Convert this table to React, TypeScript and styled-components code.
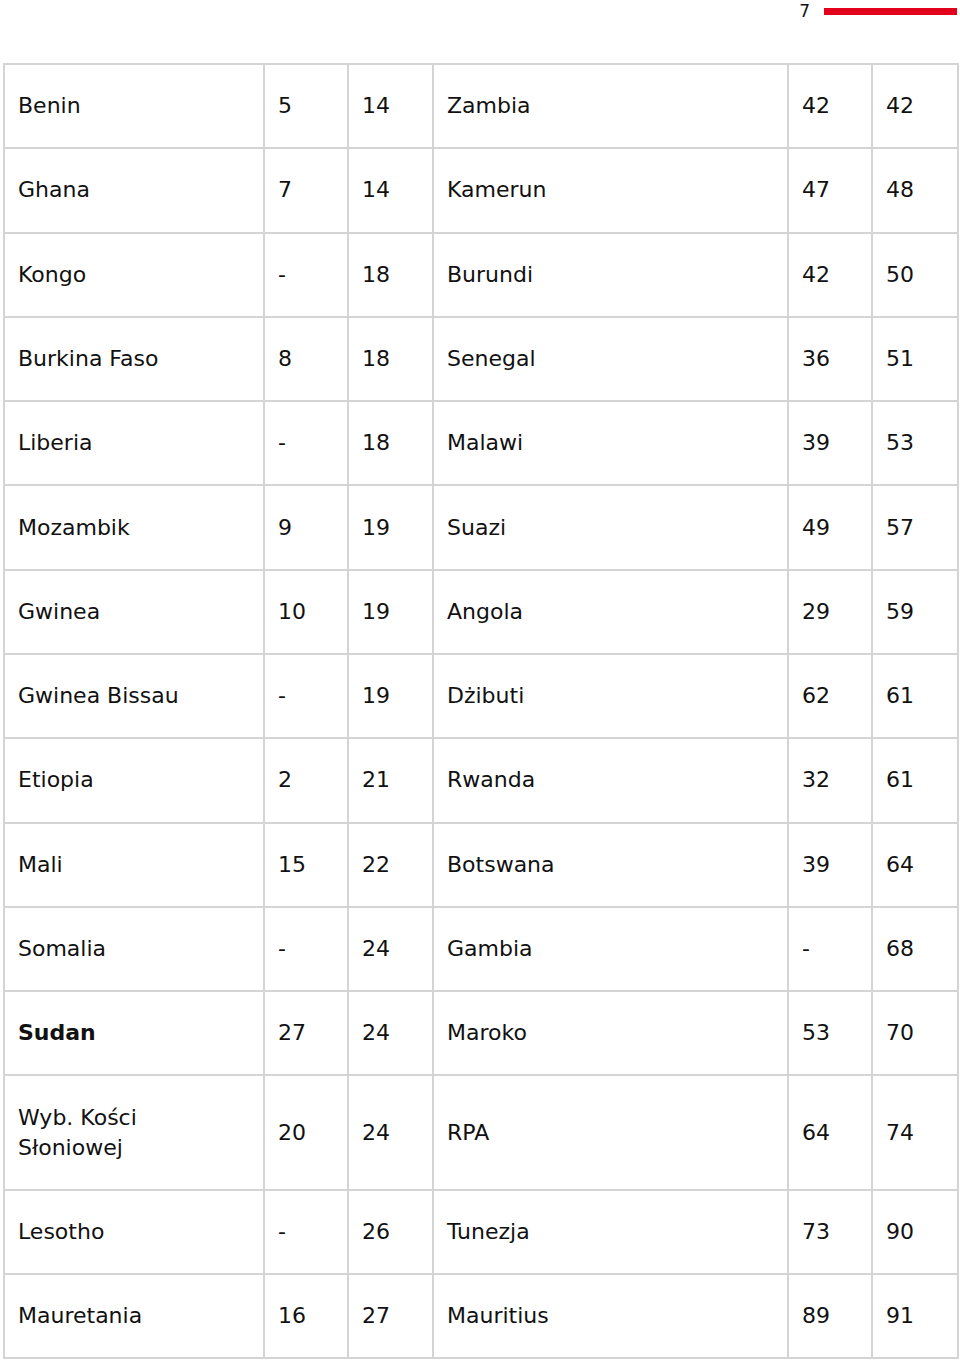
import React from "react";
import styled, { createGlobalStyle } from "styled-components";

const GlobalStyle = createGlobalStyle`
  body {
    margin: 0;
    background: #fff;
    font-family: "DejaVu Sans", "Noto Sans", sans-serif;
    color: #111;
  }
`;

const Page = styled.div`
  width: 960px;
`;

const PageHeader = styled.header`
  display: flex;
  justify-content: flex-end;
  align-items: center;
  gap: 14px;
  height: 22px;
  padding: 0 3px 0 0;
  margin-bottom: 41px;
`;

const PageNumber = styled.span`
  font-size: 17px;
  line-height: 20px;
`;

const RedBar = styled.div`
  width: 133px;
  height: 7px;
  background: #e2001a;
`;

const Table = styled.table`
  margin-left: 3px;
  width: 954px;
  border-collapse: collapse;
  table-layout: fixed;
`;

const Col = styled.col<{ $w: number }>`
  width: ${(p) => p.$w}px;
`;

const Cell = styled.td<{ $bold?: boolean }>`
  border: 2px solid #d4d4d4;
  padding: 26.15px 13px;
  font-size: 22px;
  line-height: 30px;
  font-weight: ${(p) => (p.$bold ? 700 : 400)};
  vertical-align: middle;
  white-space: nowrap;
`;

type Row = [React.ReactNode, string, string, string, string, string, boolean?];

const widths = [260, 84, 85, 355, 84, 86];

const rows: Row[] = [
  ["Benin", "5", "14", "Zambia", "42", "42"],
  ["Ghana", "7", "14", "Kamerun", "47", "48"],
  ["Kongo", "-", "18", "Burundi", "42", "50"],
  ["Burkina Faso", "8", "18", "Senegal", "36", "51"],
  ["Liberia", "-", "18", "Malawi", "39", "53"],
  ["Mozambik", "9", "19", "Suazi", "49", "57"],
  ["Gwinea", "10", "19", "Angola", "29", "59"],
  ["Gwinea Bissau", "-", "19", "Dżibuti", "62", "61"],
  ["Etiopia", "2", "21", "Rwanda", "32", "61"],
  ["Mali", "15", "22", "Botswana", "39", "64"],
  ["Somalia", "-", "24", "Gambia", "-", "68"],
  ["Sudan", "27", "24", "Maroko", "53", "70", true],
  [
    <>
      Wyb. Kości
      <br />
      Słoniowej
    </>,
    "20",
    "24",
    "RPA",
    "64",
    "74",
  ],
  ["Lesotho", "-", "26", "Tunezja", "73", "90"],
  ["Mauretania", "16", "27", "Mauritius", "89", "91"],
];

export default function App() {
  return (
    <Page>
      <GlobalStyle />
      <PageHeader>
        <PageNumber>7</PageNumber>
        <RedBar />
      </PageHeader>
      <Table>
        <colgroup>
          {widths.map((w, i) => (
            <Col key={i} $w={w} />
          ))}
        </colgroup>
        <tbody>
          {rows.map((r, i) => (
            <tr key={i}>
              <Cell $bold={r[6]}>{r[0]}</Cell>
              <Cell>{r[1]}</Cell>
              <Cell>{r[2]}</Cell>
              <Cell>{r[3]}</Cell>
              <Cell>{r[4]}</Cell>
              <Cell>{r[5]}</Cell>
            </tr>
          ))}
        </tbody>
      </Table>
    </Page>
  );
}
